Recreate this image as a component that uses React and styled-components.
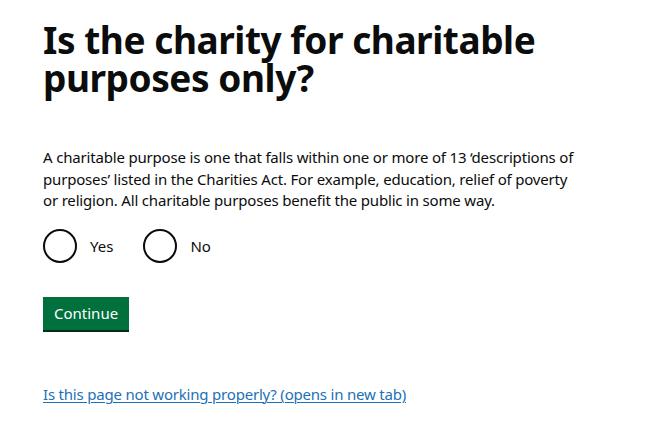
import React, {useState} from 'react';
import styled, {createGlobalStyle} from 'styled-components';

const GlobalStyle = createGlobalStyle`
  html, body {
    margin: 0;
    padding: 0;
    background: #ffffff;
  }
  body {
    font-family: "Noto Sans", Arial, sans-serif;
    color: #0b0c0c;
    -webkit-font-smoothing: antialiased;
  }
`;

const Page = styled.main`
  width: 654px;
  height: 444px;
  padding: 21px 43px 0;
  box-sizing: border-box;
`;

const Heading = styled.h1`
  margin: 0 0 50px;
  font-size: 37px;
  line-height: 38px;
  font-weight: 700;
  letter-spacing: -0.45px;
  max-width: 520px;
`;

const Hint = styled.p`
  margin: 0 0 17px;
  font-size: 15px;
  line-height: 21.5px;
  letter-spacing: -0.18px;
  max-width: 535px;
`;

const Radios = styled.div`
  display: flex;
  gap: 30px;
  margin-bottom: 34px;
`;

const RadioItem = styled.label`
  display: flex;
  align-items: center;
  gap: 13px;
  cursor: pointer;
  font-size: 15px;
`;

const Circle = styled.span`
  width: 34px;
  height: 34px;
  border: 2px solid #0b0c0c;
  border-radius: 50%;
  box-sizing: border-box;
  display: flex;
  align-items: center;
  justify-content: center;

  &::after {
    content: "";
    width: 16px;
    height: 16px;
    border-radius: 50%;
    background: #0b0c0c;
    opacity: ${({$checked}) => ($checked ? 1 : 0)};
  }
`;

const Button = styled.button`
  display: block;
  margin: 0 0 53px;
  padding: 7px 11px 7px;
  border: 0;
  background: #00703c;
  color: #ffffff;
  font-family: inherit;
  font-size: 15px;
  line-height: 19px;
  box-shadow: 0 2px 0 #002d18;
  cursor: pointer;
`;

const Link = styled.a`
  display: inline-block;
  font-size: 15px;
  line-height: 20px;
  letter-spacing: -0.2px;
  color: #1d70b8;
  text-decoration: underline;
  text-underline-offset: 2px;
  text-decoration-thickness: 1px;
`;

const options = ['Yes', 'No'];

const App = () => {
    const [value, setValue] = useState(null);

    return (
        <>
            <GlobalStyle/>
            <Page>
                <Heading>Is the charity for charitable purposes only?</Heading>
                <Hint>
                    A charitable purpose is one that falls within one or more of 13 ‘descriptions of
                    purposes’ listed in the Charities Act. For example, education, relief of poverty
                    or religion. All charitable purposes benefit the public in some way.
                </Hint>
                <Radios>
                    {options.map(option => (
                        <RadioItem key={option} onClick={() => setValue(option)}>
                            <Circle $checked={value === option}/>
                            {option}
                        </RadioItem>
                    ))}
                </Radios>
                <Button type="submit">Continue</Button>
                <Link href="#">Is this page not working properly? (opens in new tab)</Link>
            </Page>
        </>
    );
};

export default App;
